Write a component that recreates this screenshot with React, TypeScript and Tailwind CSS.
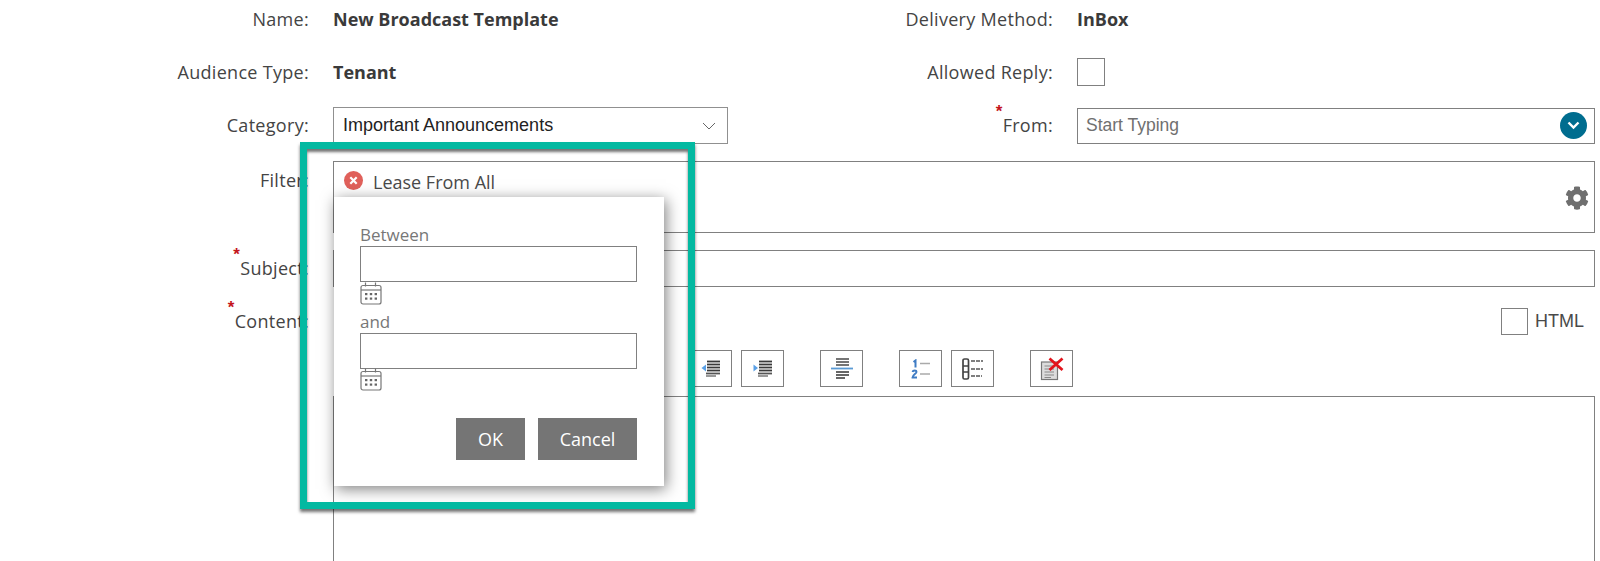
import React from "react";
import { FaCog } from "react-icons/fa";

const openSans = "font-['Open_Sans',sans-serif]";
const arial = "font-['Liberation_Sans',Arial,sans-serif]";

function Star() {
  return <span className="absolute left-[-7px] top-[-9px] text-[#c4161c] text-[17px] font-bold leading-[16px] font-['Liberation_Sans',sans-serif]">*</span>;
}

function Label({ children, star }: { children: React.ReactNode; star?: boolean }) {
  return (
    <span className="relative text-[18px] leading-[24px] tracking-[0.3px] text-[#444] font-medium whitespace-nowrap">
      {star && <Star />}
      {children}
    </span>
  );
}

function CalendarIcon() {
  return (
    <svg width="22" height="23" viewBox="0 0 22 23" fill="none" stroke="#777" strokeWidth="1.2" className="block -mt-[1px]">
      <path d="M5.5 0.5v4M15.5 0.5v4" />
      <rect x="1" y="3.5" width="20" height="18.5" rx="2" />
      <path d="M1 8h20" />
      <g fill="#666" stroke="none">
        <rect x="5" y="11" width="2.4" height="2.2" />
        <rect x="9.8" y="11" width="2.4" height="2.2" />
        <rect x="14.6" y="11" width="2.4" height="2.2" />
        <rect x="5" y="15.5" width="2.4" height="2.2" />
        <rect x="9.8" y="15.5" width="2.4" height="2.2" />
        <rect x="14.6" y="15.5" width="2.4" height="2.2" />
      </g>
    </svg>
  );
}

function ToolButton({ children, className = "" }: { children: React.ReactNode; className?: string }) {
  return (
    <div className={`w-[43px] h-[37px] border border-[#808080] bg-white flex items-center justify-center shrink-0 ${className}`}>
      {children}
    </div>
  );
}

function Lines({ ys, x1, x2, color = "#444", w = 1.8 }: { ys: number[]; x1: number; x2: number; color?: string; w?: number }) {
  return (
    <>
      {ys.map((y) => (
        <path key={y} d={`M${x1} ${y}H${x2}`} stroke={color} strokeWidth={w} />
      ))}
    </>
  );
}

function OutdentIcon() {
  return (
    <svg width="20" height="17" viewBox="0 0 20 17" fill="none">
      <Lines ys={[1.500, 4.500, 7.500, 10.500]} x1={6} x2={19} color="#3a3a3a" />
      <path d="M5 13.500H19" stroke="#555" strokeWidth="1.800" />
      <path d="M5 16H15" stroke="#777" strokeWidth="1.500" />
      <path d="M0.500 8l4.500-3.500v7z" fill="#5aa0e6" />
    </svg>
  );
}

function IndentIcon() {
  return (
    <svg width="20" height="17" viewBox="0 0 20 17" fill="none">
      <Lines ys={[1.500, 4.500, 7.500, 10.500]} x1={6} x2={19} color="#3a3a3a" />
      <path d="M5 13.500H19" stroke="#555" strokeWidth="1.800" />
      <path d="M5 16H15" stroke="#777" strokeWidth="1.500" />
      <path d="M5 8L0.500 4.500v7z" fill="#5aa0e6" />
    </svg>
  );
}

function CenterIcon() {
  return (
    <svg width="24" height="24" viewBox="0 0 24 24" fill="none">
      <Lines ys={[2, 5, 8]} x1={6} x2={19} color="#666" />
      <path d="M1 11.500H23" stroke="#5b9bd5" strokeWidth="1.800" />
      <Lines ys={[15, 18]} x1={6} x2={19} color="#555" />
      <path d="M6 21H15" stroke="#555" strokeWidth="1.800" />
    </svg>
  );
}

function NumberedIcon() {
  return (
    <svg width="20" height="20" viewBox="0 0 20 20" fill="none">
      <path d="M2.500 3L4.500 1.500V8.500" stroke="#3f7cc4" strokeWidth="2" />
      <path d="M1.500 13c.5-2 4-2 4 0 0 1.500-4 3-4 5.500h4.500" stroke="#3f7cc4" strokeWidth="1.900" />
      <path d="M9 4.500H19" stroke="#aaa" strokeWidth="1.500" />
      <path d="M9 15H19" stroke="#aaa" strokeWidth="1.500" />
    </svg>
  );
}

function BulletIcon() {
  return (
    <svg width="22" height="24" viewBox="0 0 22 24" fill="none">
      <rect x="1" y="2" width="5.500" height="20" rx="1.500" stroke="#444" strokeWidth="1.700" />
      <path d="M1 9H6.500M1 15H6.500" stroke="#444" strokeWidth="1.700" />
      <path d="M9 4H21" stroke="#555" strokeWidth="1.500" strokeDasharray="4 1" />
      <path d="M9 12H21" stroke="#555" strokeWidth="1.500" strokeDasharray="4 1" />
      <path d="M9 19H20" stroke="#555" strokeWidth="1.500" strokeDasharray="4 1" />
    </svg>
  );
}

function ClearIcon() {
  return (
    <svg width="24" height="24" viewBox="0 0 24 24" fill="none">
      <rect x="1.500" y="5" width="16" height="17.500" fill="#dcdcdc" stroke="#777" strokeWidth="1.200" />
      <path d="M4.500 9H14M4.500 12H14M4.500 15H14M4.500 18H14M4.500 20.500H11" stroke="#888" strokeWidth="1.100" />
      <path d="M9.500 1.500L22.500 13M22.500 1.500L9.500 13" stroke="#e3141c" strokeWidth="2.800" />
    </svg>
  );
}

export default function App() {
  return (
    <div className={`relative w-[1600px] h-[561px] overflow-hidden bg-white ${openSans}`}>
      <div className="flex flex-col">
        {/* Name / Delivery */}
        <div className="flex h-[39px] items-center">
          <div className="w-[309px] text-right"><Label>Name:</Label></div>
          <div className="w-[395px] ml-[24px] text-[18px] font-bold text-[#3a3a3a]">New Broadcast Template</div>
          <div className="w-[325px] text-right"><Label>Delivery Method:</Label></div>
          <div className="ml-[24px] text-[18px] font-bold text-[#3a3a3a]">InBox</div>
        </div>
        {/* Audience / Reply */}
        <div className="flex h-[38px] items-center mt-[14px]">
          <div className="w-[309px] text-right"><Label>Audience Type:</Label></div>
          <div className="w-[395px] ml-[24px] text-[18px] font-bold text-[#3a3a3a]">Tenant</div>
          <div className="w-[325px] text-right"><Label>Allowed Reply:</Label></div>
          <div className="ml-[24px] w-[28px] h-[28px] border border-[#808080] bg-white" />
        </div>
        {/* Category / From */}
        <div className="flex h-[37px] items-center mt-[16px]">
          <div className="w-[309px] text-right"><Label>Category:</Label></div>
          <div className={`w-[395px] h-[37px] ml-[24px] border border-[#909090] flex items-center justify-between pl-[9px] pr-[11px] text-[18px] text-[#222] ${arial}`}>
            <span>Important Announcements</span>
            <svg width="14" height="8" viewBox="0 0 14 8" fill="none" stroke="#666" strokeWidth="1"><path d="M1 1l6 6 6-6" /></svg>
          </div>
          <div className="w-[325px] text-right"><Label star>From:</Label></div>
          <div className={`w-[518px] h-[36px] ml-[24px] border border-[#808080] flex items-center justify-between pl-[8px] pr-[7px] text-[17.5px] text-[#707070] ${arial}`}>
            <span>Start Typing</span>
            <span className="w-[27px] h-[27px] rounded-full bg-[#006d8f] flex items-center justify-center">
              <svg width="13" height="9" viewBox="0 0 13 9" fill="none" stroke="#fff" strokeWidth="2.400"><path d="M1.500 1.500l5 5 5-5" /></svg>
            </span>
          </div>
        </div>
        {/* Filter */}
        <div className="flex h-[72px] mt-[17px]">
          <div className="w-[309px] text-right pt-[7px]"><Label>Filter:</Label></div>
          <div className="w-[1262px] ml-[24px] border border-[#808080] flex justify-between pl-[10px] pr-[5px]">
            <div className="flex items-center h-[40px] gap-[10px]">
              <svg width="19" height="19" viewBox="0 0 19 19" className="shrink-0 -mt-[3px]">
                <circle cx="9.500" cy="9.500" r="9.500" fill="#e0605a" />
                <path d="M6.300 6.300l6.400 6.400M12.700 6.300l-6.400 6.400" stroke="#fff" strokeWidth="2.200" />
              </svg>
              <span className="text-[18px] text-[#4a4a4a]">Lease From All</span>
            </div>
            <div className="pt-[24px]"><FaCog size={24} color="#6f6f6f" /></div>
          </div>
        </div>
        {/* Subject */}
        <div className="flex h-[37px] items-center mt-[17px]">
          <div className="w-[309px] text-right"><Label star>Subject:</Label></div>
          <div className="w-[1262px] h-[37px] ml-[24px] border border-[#808080]" />
        </div>
        {/* Content */}
        <div className="flex h-[37px] items-center mt-[16px]">
          <div className="w-[309px] text-right"><Label star>Content:</Label></div>
          <div className="w-[1262px] ml-[24px] flex items-center justify-end pr-[11px]">
            <div className="w-[27px] h-[27px] border border-[#808080]" />
            <span className={`ml-[7px] text-[18px] text-[#4a4a4a] ${arial}`}>HTML</span>
          </div>
        </div>
        {/* Toolbar */}
        <div className="flex mt-[10px] ml-[689px]">
          <ToolButton><OutdentIcon /></ToolButton>
          <ToolButton className="ml-[9px]"><IndentIcon /></ToolButton>
          <ToolButton className="ml-[36px]"><CenterIcon /></ToolButton>
          <ToolButton className="ml-[36px]"><NumberedIcon /></ToolButton>
          <ToolButton className="ml-[9px]"><BulletIcon /></ToolButton>
          <ToolButton className="ml-[36px]"><ClearIcon /></ToolButton>
        </div>
        {/* Editor */}
        <div className="w-[1262px] h-[200px] ml-[333px] mt-[9px] border border-[#808080] shrink-0" />
      </div>

      {/* Popover */}
      <div className="absolute left-[334px] top-[197px] w-[330px] h-[289px] bg-white shadow-[2px_3px_14px_rgba(0,0,0,0.5)] pl-[26px] pt-[27px] flex flex-col z-10">
        <div className="text-[17px] leading-[22px] text-[#777]">Between</div>
        <div className="w-[277px] h-[36px] border border-[#808080] shrink-0" />
        <div className="mt-[1px] h-[22px]"><CalendarIcon /></div>
        <div className="mt-[6px] text-[17px] leading-[22px] text-[#777]">and</div>
        <div className="w-[277px] h-[36px] border border-[#808080] shrink-0" />
        <div className="h-[22px]"><CalendarIcon /></div>
        <div className="mt-[27px] w-[277px] flex justify-end gap-[13px]">
          <button className="w-[69px] h-[42px] bg-[#757575] text-white text-[18px]">OK</button>
          <button className="w-[99px] h-[42px] bg-[#757575] text-white text-[18px]">Cancel</button>
        </div>
      </div>

      {/* Highlight annotation */}
      <div className="absolute left-[300px] top-[142px] w-[395px] h-[367px] border-[7px] border-[#03b9a1] shadow-[0_3px_3px_rgba(0,0,0,0.55),inset_0_3px_3px_rgba(0,0,0,0.55)] z-20" />
    </div>
  );
}
